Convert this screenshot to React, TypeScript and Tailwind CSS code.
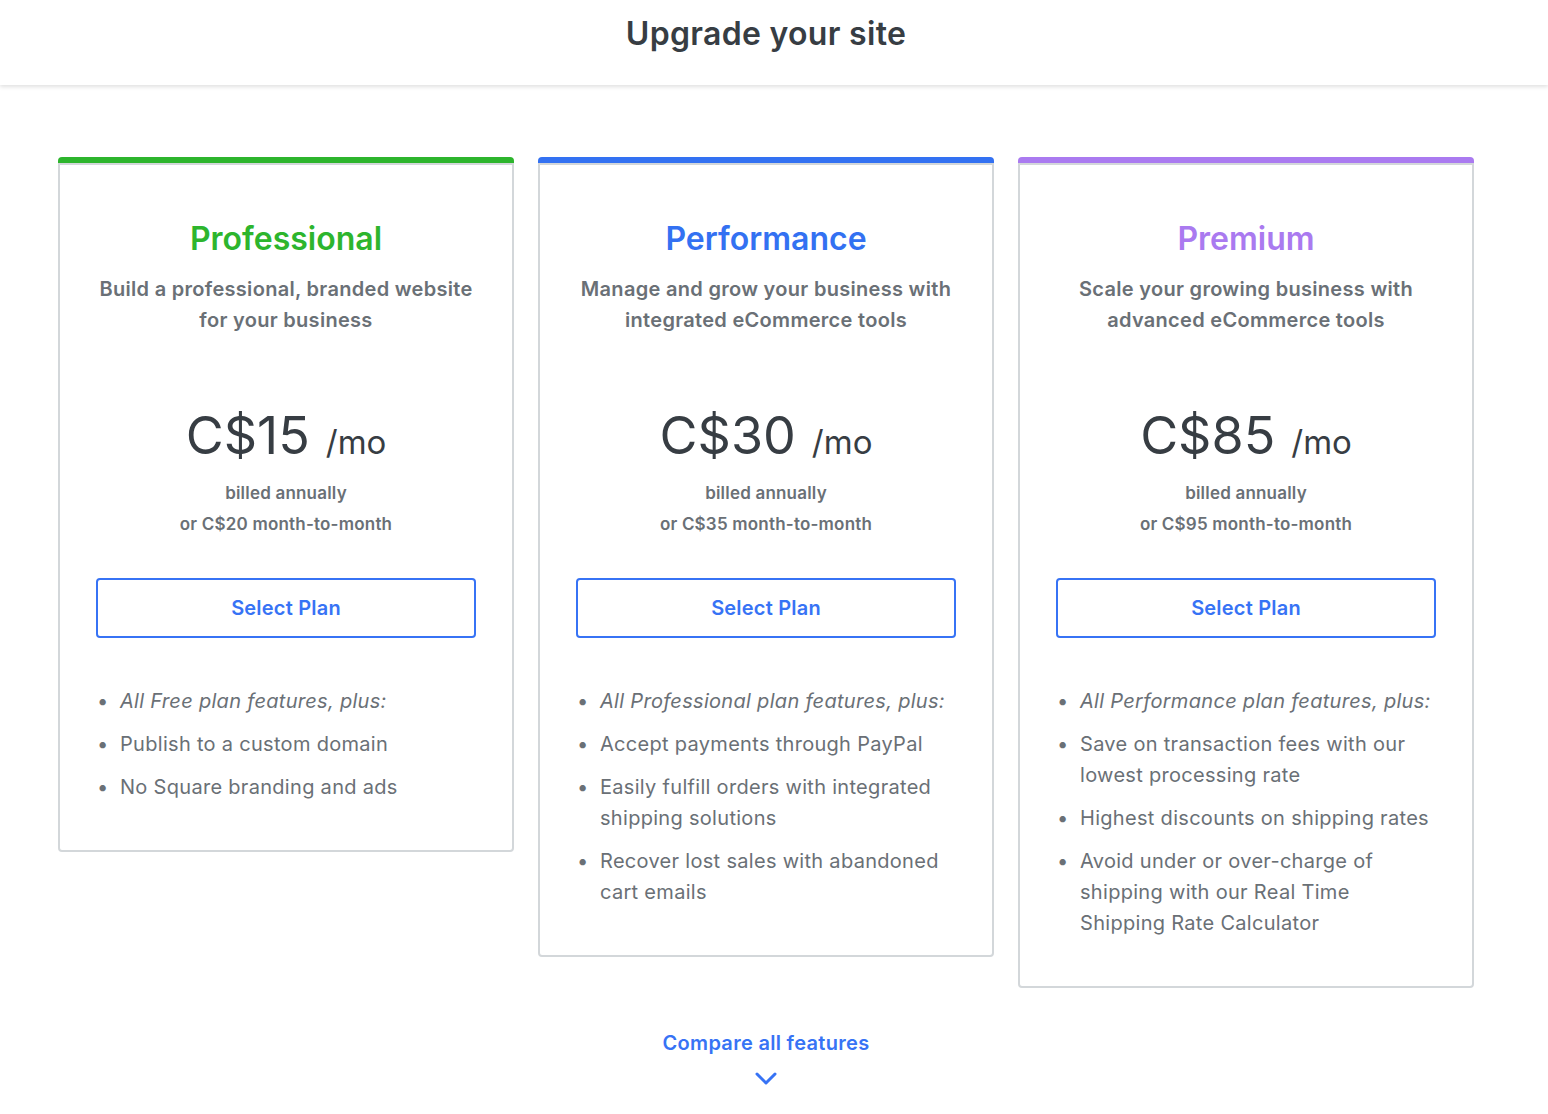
type Plan = {
  name: string;
  color: string;
  bar: string;
  desc: string[];
  price: string;
  monthly: string;
  features: { text: string; italic?: boolean }[];
};

const plans: Plan[] = [
  {
    name: "Professional",
    color: "text-[#2db52d]",
    bar: "bg-[#2db52d]",
    desc: ["Build a professional, branded website", "for your business"],
    price: "C$15",
    monthly: "or C$20 month-to-month",
    features: [
      { text: "All Free plan features, plus:", italic: true },
      { text: "Publish to a custom domain" },
      { text: "No Square branding and ads" },
    ],
  },
  {
    name: "Performance",
    color: "text-[#3371f2]",
    bar: "bg-[#3371f2]",
    desc: ["Manage and grow your business with", "integrated eCommerce tools"],
    price: "C$30",
    monthly: "or C$35 month-to-month",
    features: [
      { text: "All Professional plan features, plus:", italic: true },
      { text: "Accept payments through PayPal" },
      { text: "Easily fulfill orders with integrated shipping solutions" },
      { text: "Recover lost sales with abandoned cart emails" },
    ],
  },
  {
    name: "Premium",
    color: "text-[#aa7af0]",
    bar: "bg-[#aa7af0]",
    desc: ["Scale your growing business with", "advanced eCommerce tools"],
    price: "C$85",
    monthly: "or C$95 month-to-month",
    features: [
      { text: "All Performance plan features, plus:", italic: true },
      { text: "Save on transaction fees with our lowest processing rate" },
      { text: "Highest discounts on shipping rates" },
      { text: "Avoid under or over-charge of shipping with our Real Time Shipping Rate Calculator" },
    ],
  },
];

const PlanCard = ({ plan }: { plan: Plan }) => (
  <div className="w-[456px] flex flex-col">
    <div className={`h-[6px] rounded-t-[4px] ${plan.bar}`} />
    <div className="border-2 border-[#d3d7da] rounded-b-[4px] px-[36px] pt-[54px] pb-[47px]">
      <h2 className={`text-center text-[32px] leading-[40px] font-semibold ${plan.color}`}>{plan.name}</h2>
      <p className="mt-[15px] text-center text-[20px] leading-[31px] tracking-[0.3px] font-semibold text-[#6a7076]">
        {plan.desc[0]}
        <br />
        {plan.desc[1]}
      </p>
      <div className="mt-[68px] flex items-baseline justify-center gap-[16px] text-[#373d43]">
        <span className="text-[52px] leading-[64px]">{plan.price}</span>
        <span className="text-[33px]">/mo</span>
      </div>
      <p className="mt-[10px] text-center text-[17px] leading-[31px] tracking-[0.2px] font-semibold text-[#6a7076]">
        billed annually
        <br />
        {plan.monthly}
      </p>
      <button className="mt-[38px] w-full h-[60px] border-2 border-[#3773f5] rounded-[4px] text-[20px] tracking-[0.2px] font-semibold text-[#3773f5]">
        Select Plan
      </button>
      <ul className="mt-[48px] flex flex-col gap-[12px] text-[20px] leading-[31px] tracking-[0.3px] text-[#6a7076]">
        {plan.features.map((f) => (
          <li key={f.text} className="flex">
            <span className="w-[24px] shrink-0 pl-[1px]">•</span>
            <span className={f.italic ? "italic" : ""}>{f.text}</span>
          </li>
        ))}
      </ul>
    </div>
  </div>
);

export default function App() {
  return (
    <div className="min-h-screen bg-white font-['Inter',sans-serif]">
      <header className="h-[85px] pr-[16px] flex items-center justify-center shadow-[0_2px_4px_rgba(0,0,0,0.12)]">
        <h1 className="text-[32px] tracking-[0.3px] font-semibold text-[#373d43] -mt-[18px]">Upgrade your site</h1>
      </header>
      <main className="pt-[72px] pl-[58px]">
        <div className="flex items-start gap-[24px]">
          {plans.map((p) => (
            <PlanCard key={p.name} plan={p} />
          ))}
        </div>
        <div className="w-[1416px] flex flex-col items-center mt-[40px]">
          <a className="text-[20px] leading-[30px] tracking-[0.3px] font-semibold text-[#3773f5]">Compare all features</a>
          <svg className="mt-[14px]" width="22" height="14" viewBox="0 0 22 14" fill="none">
            <polyline points="2,2 11,11 20,2" stroke="#3773f5" strokeWidth="3" strokeLinecap="round" strokeLinejoin="round" />
          </svg>
        </div>
      </main>
    </div>
  );
}
